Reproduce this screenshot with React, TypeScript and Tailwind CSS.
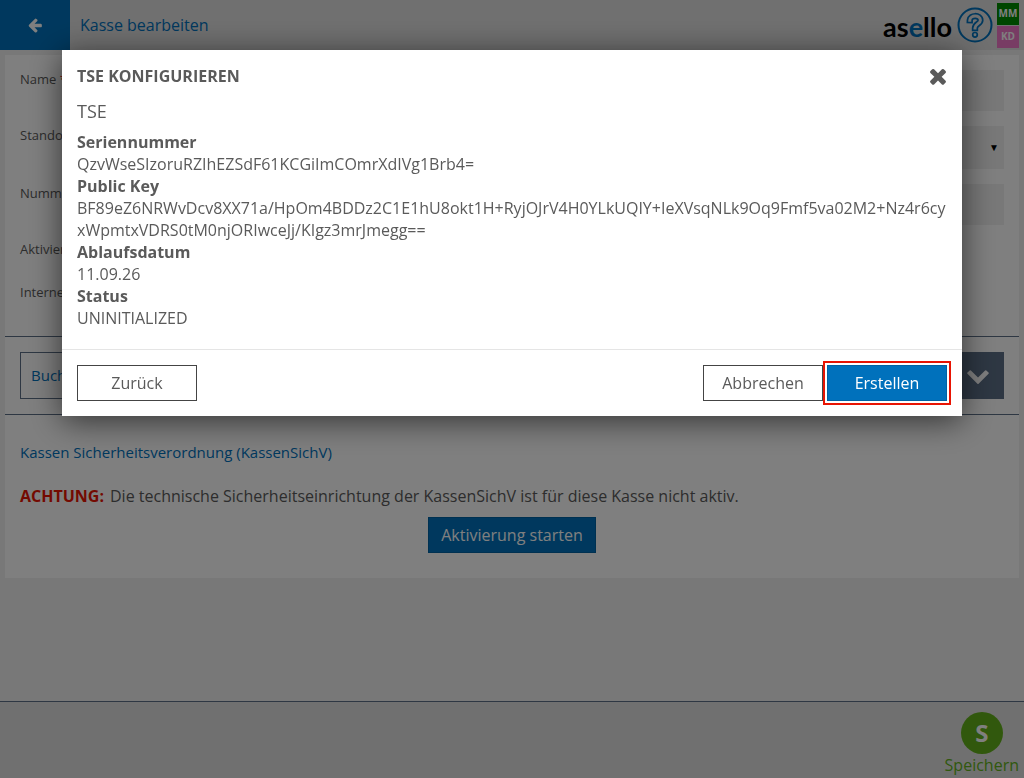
import type { ReactNode } from "react";

const icons = {
  arrowLeft:
    "M1664 896v128q0 53-32.5 90.5t-84.5 37.5h-704l293 294q38 36 38 90t-38 90l-75 76q-37 37-90 37-52 0-91-37l-651-652q-37-37-37-90 0-52 37-91l651-650q38-38 91-38 52 0 90 38l75 74q38 38 38 91t-38 91l-293 293h704q52 0 84.5 37.5t32.5 90.5z",
  close:
    "M1490 1322q0 40-28 68l-136 136q-28 28-68 28t-68-28l-294-294-294 294q-28 28-68 28t-68-28l-136-136q-28-28-28-68t28-68l294-294-294-294q-28-28-28-68t28-68l136-136q28-28 68-28t68 28l294 294 294-294q28-28 68-28t68 28l136 136q28 28 28 68t-28 68l-294 294 294 294q28 28 28 68z",
  chevronDown:
    "M1683 808l-742 741q-19 19-45 19t-45-19l-742-741q-19-19-19-45.5t19-45.5l166-165q19-19 45-19t45 19l531 531 531-531q19-19 45-19t45 19l166 165q19 19 19 45.5t-19 45.5z",
};

function Icon({ path, className }: { path: string; className: string }) {
  return (
    <svg viewBox="0 0 1792 1792" fill="currentColor" className={className} aria-hidden="true">
      <path d={path} />
    </svg>
  );
}

function HelpIcon() {
  const mark = "M12.8 13.2 C13 7.8 23.4 7.6 23.4 13.2 C23.4 17 18 16.8 18 21";
  return (
    <svg viewBox="0 0 36 36" fill="none" className="size-9" aria-hidden="true">
      <circle cx="18" cy="18" r="16.5" stroke="#0071bc" strokeWidth="2" />
      <path d={mark} stroke="#0071bc" strokeWidth="6.4" strokeLinecap="square" />
      <path d={mark} stroke="#e0e0e0" strokeWidth="3" strokeLinecap="square" />
      <circle cx="18" cy="27.8" r="2.3" fill="#e0e0e0" stroke="#0071bc" strokeWidth="1.7" />
    </svg>
  );
}

function FormRow({ label, id, required, className, children }: {
  label: string;
  id: string;
  required?: boolean;
  className: string;
  children: ReactNode;
}) {
  return (
    <div className={`flex items-start ${className}`}>
      <label htmlFor={id} className="w-64 shrink-0 text-[13px] leading-[18px]">
        {label}
        {required && <span className="text-[#e81403]"> *</span>}
      </label>
      {children}
    </div>
  );
}

function Entry({ label, value }: { label: string; value: string }) {
  return (
    <>
      <dt className="font-bold">{label}</dt>
      <dd className="break-all">{value}</dd>
    </>
  );
}

function TseDialog() {
  return (
    <div className="fixed inset-0 flex items-start justify-center bg-black/50 px-8 pt-[50px]">
      <div
        role="dialog"
        aria-labelledby="tse-title"
        className="w-full max-w-[900px] bg-white shadow-[0_5px_30px_rgba(0,0,0,0.6)]"
      >
        <div className="flex items-center justify-between pt-[14px] pr-3 pl-[15px]">
          <h2 id="tse-title" className="text-base leading-6 font-bold">TSE KONFIGURIEREN</h2>
          <button type="button" aria-label="Schließen">
            <Icon path={icons.close} className="size-6" />
          </button>
        </div>
        <div className="px-[15px] pt-[11px] pb-5">
          <h3 className="pb-2 text-lg leading-6">TSE</h3>
          <dl className="leading-[22px]">
            <Entry label="Seriennummer" value="QzvWseSIzoruRZIhEZSdF61KCGiImCOmrXdIVg1Brb4=" />
            <Entry
              label="Public Key"
              value="BF89eZ6NRWvDcv8XX71a/HpOm4BDDz2C1E1hU8okt1H+RyjOJrV4H0YLkUQIY+IeXVsqNLk9Oq9Fmf5va02M2+Nz4r6cyxWpmtxVDRS0tM0njORIwceJj/KIgz3mrJmegg=="
            />
            <Entry label="Ablaufsdatum" value="11.09.26" />
            <Entry label="Status" value="UNINITIALIZED" />
          </dl>
        </div>
        <div className="flex items-center border-t border-[#e5e5e5] p-[15px]">
          <button type="button" className="h-9 w-[120px] border border-[#444]">Zurück</button>
          <button type="button" className="ml-auto h-9 w-[120px] border border-[#444]">Abbrechen</button>
          <button
            type="button"
            className="ml-1 h-9 w-[120px] border border-[#0062a3] bg-[#0071bc] font-medium text-white outline-2 outline-offset-2 outline-[#e81403]"
          >
            Erstellen
          </button>
        </div>
      </div>
    </div>
  );
}

export default function App() {
  return (
    <div className="flex min-h-screen flex-col bg-[#f0f0f0] font-['Open_Sans',sans-serif] text-base text-[#5a5a5a]">
      <header className="flex h-[50px] items-center bg-[#e0e0e0]">
        <button
          type="button"
          aria-label="Zurück"
          className="flex h-full w-[70px] items-center justify-center bg-[#0071bc] text-white"
        >
          <Icon path={icons.arrowLeft} className="size-4" />
        </button>
        <h1 className="pl-[10px] text-[#0071bc]">Kasse bearbeiten</h1>
        <div className="ml-auto flex items-center">
          <span className="pt-1 font-['Lato',sans-serif] text-[27px] leading-8 font-bold text-black">
            as<span className="text-[#0071bc]">e</span>llo
          </span>
          <a href="#hilfe" aria-label="Hilfe" className="ml-[5px]">
            <HelpIcon />
          </a>
          <div className="mr-[5px] ml-1 flex flex-col gap-px text-[10px] font-bold text-white">
            <span className="flex size-[22px] items-center justify-center bg-[#008c00]">MM</span>
            <span className="flex size-[22px] items-center justify-center bg-[#f078c8]">KD</span>
          </div>
        </div>
      </header>

      <main className="flex-1 p-[5px]">
        <div className="bg-white">
          <form className="flex flex-col gap-[15px] p-[15px]">
            <FormRow label="Name" id="name" required className="h-[41px]">
              <input id="name" className="h-full flex-1 bg-[#f0f0f0] px-3" />
            </FormRow>
            <FormRow label="Standort" id="standort" className="h-[43px]">
              <div className="relative h-full flex-1">
                <select id="standort" className="h-full w-full appearance-none bg-[#f0f0f0] px-3" />
                <span className="pointer-events-none absolute inset-y-0 right-[5px] flex items-center text-[10px] text-black">
                  ▼
                </span>
              </div>
            </FormRow>
            <FormRow label="Nummer" id="nummer" className="h-[41px]">
              <input id="nummer" className="h-full flex-1 bg-[#f0f0f0] px-3" />
            </FormRow>
            <FormRow label="Aktiviert" id="aktiviert" className="h-7">
              <input id="aktiviert" type="checkbox" className="size-5" />
            </FormRow>
            <FormRow label="Internet" id="internet" className="h-[38px]">
              <input id="internet" type="checkbox" className="size-5" />
            </FormRow>
          </form>

          <section className="border-y border-[#5c6f87] p-[15px]">
            <button
              type="button"
              className="flex h-[47px] w-full items-center justify-between border border-[#5c6f87] pl-[10px] text-[15px] text-[#0071bc]"
            >
              Buchungen
              <span className="flex h-full w-[50px] items-center justify-center bg-[#5c6f87] pb-[2px] text-white">
                <Icon path={icons.chevronDown} className="size-6" />
              </span>
            </button>
          </section>

          <section className="px-[15px] py-[25px]">
            <h2 className="text-[15px] leading-6 text-[#0071bc]">Kassen Sicherheitsverordnung (KassenSichV)</h2>
            <p className="pt-5 leading-6">
              <strong className="mr-[6px] font-bold text-[#e81403]">ACHTUNG:</strong>
              Die technische Sicherheitseinrichtung der KassenSichV ist für diese Kasse nicht aktiv.
            </p>
            <div className="flex justify-center pt-[9px]">
              <button
                type="button"
                className="h-9 border border-[#0062a3] bg-[#0071bc] px-3 font-medium text-white"
              >
                Aktivierung starten
              </button>
            </div>
          </section>
        </div>
      </main>

      <footer className="flex h-[77px] justify-end border-t border-[#5c6f87] bg-[#e0e0e0] px-[5px] pt-[10px]">
        <button type="button" className="flex flex-col items-center text-[#62b01a]">
          <span className="flex size-[42px] items-center justify-center rounded-full bg-[#62b01a] text-2xl font-bold text-white">
            S
          </span>
          <span className="leading-[22px]">Speichern</span>
        </button>
      </footer>

      <TseDialog />
    </div>
  );
}
